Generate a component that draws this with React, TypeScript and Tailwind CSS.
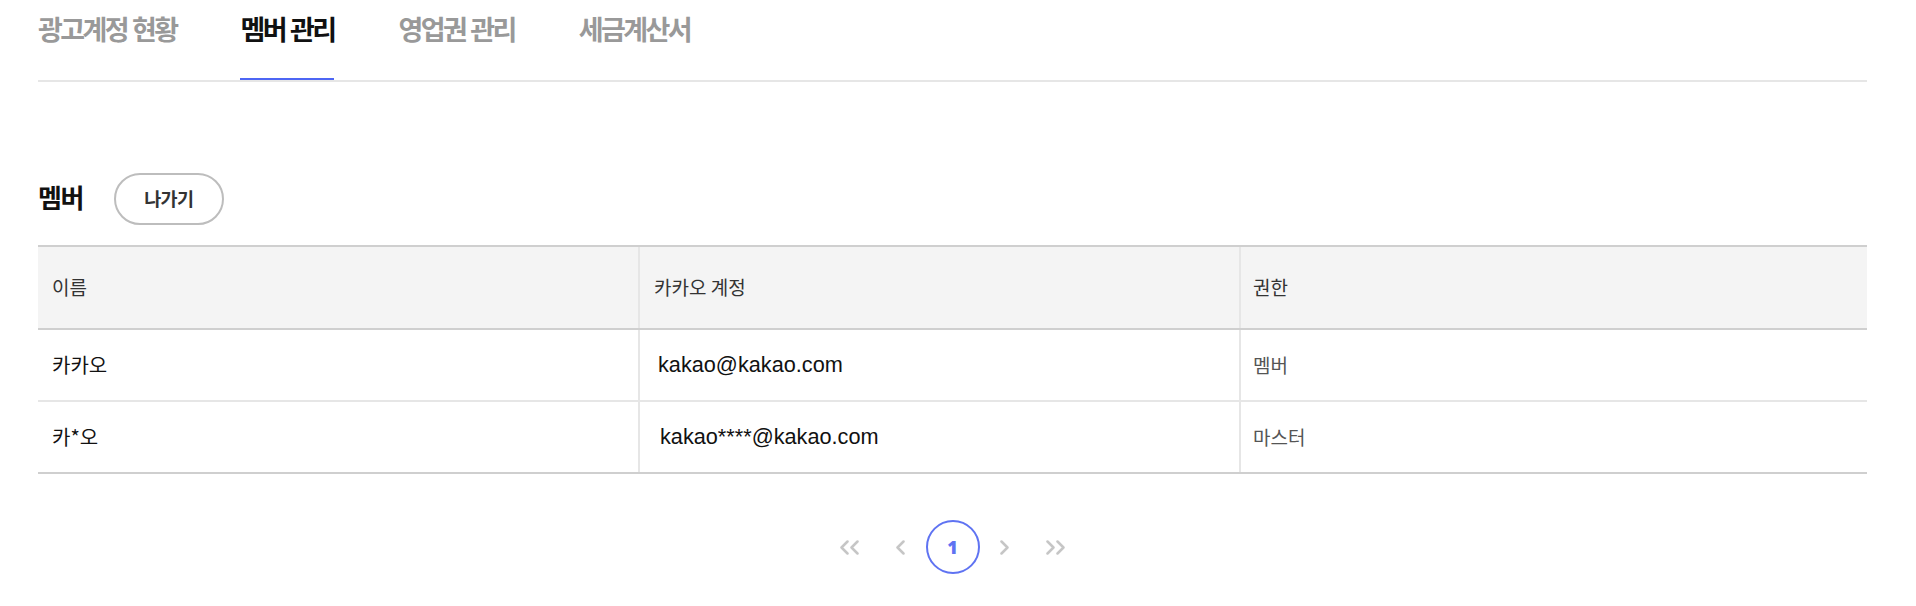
const kr = "font-['Noto_Sans_CJK_KR',sans-serif]"

const tabs = [
  { id: "ads", label: "광고계정 현황" },
  { id: "members", label: "멤버 관리" },
  { id: "sales", label: "영업권 관리" },
  { id: "tax", label: "세금계산서" },
]

const members = [
  { name: "카카오", email: "kakao@kakao.com", role: "멤버", pad: "pl-[18px]" },
  { name: "카*오", email: "kakao****@kakao.com", role: "마스터", pad: "pl-[20px]" },
]

function Chevrons({ dir, double }: { dir: "left" | "right"; double?: boolean }) {
  const w = double ? 19 : 9
  const flip = dir === "right" ? `scale(-1 1) translate(-${w} 0)` : undefined
  return (
    <svg width={w} height="15" viewBox={`0 0 ${w} 15`} fill="none" stroke="currentColor" strokeWidth="2.5" strokeLinecap="round" strokeLinejoin="round">
      <g transform={flip}>
        <path d="M7.5 1.5 L1.5 7.5 L7.5 13.5" />
        {double && <path d="M17.5 1.5 L11.5 7.5 L17.5 13.5" />}
      </g>
    </svg>
  )
}

export default function App() {
  const active = "members"

  return (
    <div className={`min-h-[606px] w-full bg-white ${kr}`}>
      <div className="ml-[38px] w-[1829px]">
        {/* Tabs */}
        <nav className="flex gap-[64px] border-b-2 border-[#e6e6e6]">
          {tabs.map((tab) => (
            <button
              key={tab.id}
              className={`h-[80px] border-b-2 pb-[20px] text-[27px] font-bold leading-[58px] tracking-[-2.6px] [word-spacing:1.5px] ${
                tab.id === active ? "border-[#4d66f4] text-[#111]" : "border-transparent text-[#999]"
              }`}
            >
              {tab.label}
            </button>
          ))}
        </nav>

        {/* Section header */}
        <div className="mt-[91px] flex items-center gap-[31px]">
          <h2 className="mb-[6px] text-[26px] font-bold tracking-[-1.5px] text-[#111]">멤버</h2>
          <button className="h-[52px] w-[110px] rounded-full border-2 border-[#bdbdbd] text-[18.5px] font-semibold tracking-[-0.6px] text-[#333]">
            나가기
          </button>
        </div>

        {/* Table */}
        <div className="mt-[20px] border-t-2 border-[#cfcfcf]">
          <div className="grid h-[83px] grid-cols-[602px_601px_1fr] border-b-2 border-[#cfcfcf] bg-[#f4f4f4] text-[19px] text-[#333]">
            <div className="flex items-center border-r-2 border-[#e6e6e6] px-[14px]">이름</div>
            <div className="flex items-center border-r-2 border-[#e6e6e6] px-[14px]">카카오 계정</div>
            <div className="flex items-center px-[12px]">권한</div>
          </div>
          {members.map((m, i) => (
            <div
              key={m.email}
              className={`grid h-[72px] grid-cols-[602px_601px_1fr] border-b-2 ${
                i === members.length - 1 ? "border-[#cfcfcf]" : "border-[#e6e6e6]"
              }`}
            >
              <div className="flex items-center border-r-2 border-[#e6e6e6] px-[14px] text-[20px] text-[#111]">
                {m.name}
              </div>
              <div
                className={`flex items-center border-r-2 border-[#e6e6e6] ${m.pad} font-['Liberation_Sans',Arial,sans-serif] text-[21.7px] text-[#111]`}
              >
                {m.email}
              </div>
              <div className="flex items-center px-[12px] text-[19px] text-[#555]">{m.role}</div>
            </div>
          ))}
        </div>

        {/* Pagination */}
        <div className="mt-[46px] flex items-center justify-center">
          <button className="flex h-[54px] w-[52px] items-center justify-center text-[#c6c6c6]">
            <Chevrons dir="left" double />
          </button>
          <button className="flex h-[54px] w-[50px] items-center justify-center text-[#c6c6c6]">
            <Chevrons dir="left" />
          </button>
          <button className="flex h-[54px] w-[54px] items-center justify-center rounded-full border-2 border-[#5f73f2] font-['Open_Sans',sans-serif] text-[18px] font-extrabold text-[#5f73f2]">
            1
          </button>
          <button className="flex h-[54px] w-[50px] items-center justify-center text-[#c6c6c6]">
            <Chevrons dir="right" />
          </button>
          <button className="flex h-[54px] w-[52px] items-center justify-center text-[#c6c6c6]">
            <Chevrons dir="right" double />
          </button>
        </div>
      </div>
    </div>
  )
}
